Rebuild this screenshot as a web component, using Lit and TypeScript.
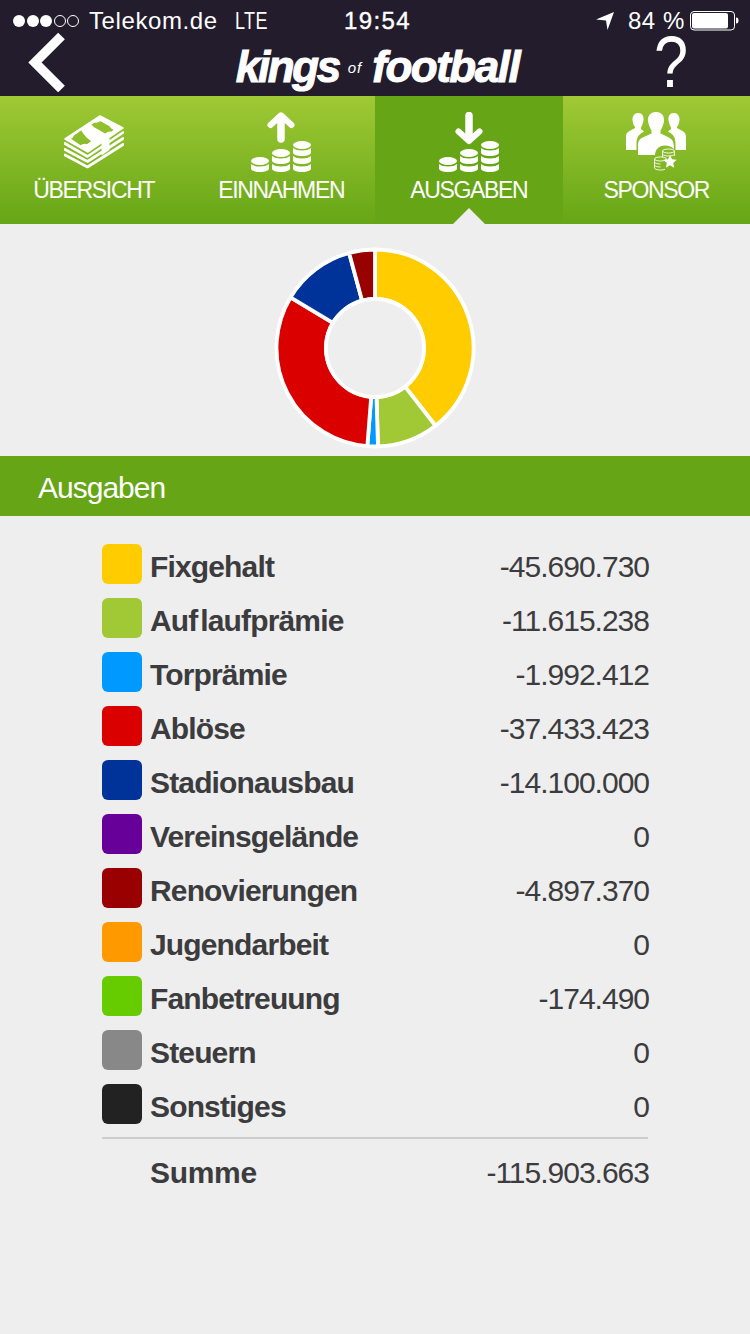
import { LitElement, html, css, svg } from "lit";
import { customElement } from "lit/decorators.js";

const rows: [string, string, string][] = [
  ["#ffcc00", "Fixgehalt", "-45.690.730"],
  ["#a1c935", "Auflaufprämie", "-11.615.238"],
  ["#0099ff", "Torprämie", "-1.992.412"],
  ["#db0000", "Ablöse", "-37.433.423"],
  ["#003399", "Stadionausbau", "-14.100.000"],
  ["#660099", "Vereinsgelände", "0"],
  ["#990000", "Renovierungen", "-4.897.370"],
  ["#ff9900", "Jugendarbeit", "0"],
  ["#66cc00", "Fanbetreuung", "-174.490"],
  ["#888888", "Steuern", "0"],
  ["#222222", "Sonstiges", "0"],
];

const pieData: [string, number][] = [
  ["#ffcc00", 45690730],
  ["#a1c935", 11615238],
  ["#0099ff", 1992412],
  ["#db0000", 37433423],
  ["#003399", 14100000],
  ["#990000", 4897370],
];

function donut() {
  const total = pieData.reduce((s, d) => s + d[1], 0);
  const cx = 102, cy = 102, R = 98.5, r = 49;
  let a = 0;
  const P = (rad: number, ang: number) =>
    `${(cx + rad * Math.sin(ang)).toFixed(2)} ${(cy - rad * Math.cos(ang)).toFixed(2)}`;
  return pieData.map(([c, v]) => {
    const a0 = a;
    const a1 = a + (v / total) * Math.PI * 2;
    a = a1;
    const large = a1 - a0 > Math.PI ? 1 : 0;
    const d = `M${P(R, a0)}A${R} ${R} 0 ${large} 1 ${P(R, a1)}L${P(r, a1)}A${r} ${r} 0 ${large} 0 ${P(r, a0)}Z`;
    return svg`<path d=${d} fill=${c} stroke="#fff" stroke-width="3.8" stroke-linejoin="round"/>`;
  });
}

function stack(xc: number, bands: number[]) {
  const capTop = bands[0] - 7;
  return svg`<ellipse cx=${xc} cy=${capTop + 4} rx="9" ry="4" fill="#fff"/>
    ${bands.map((y) => svg`<path fill="#fff" d="M${xc - 9} ${y}c2 1.700 5 2.500 9 2.500s7-.8 9-2.500v4.500c0 2-4 3.500-9 3.500s-9-1.500-9-3.500z"/>`)}`;
}

const coinStacks = svg`${stack(9, [52])}${stack(30, [44, 52])}${stack(51, [36, 44, 52])}`;

const upIcon = html`<svg class="ic" viewBox="0 0 60 60" width="60" height="60" aria-hidden="true">
  <path d="M19.500 13L30 3.300 40.500 13" fill="none" stroke="#fff" stroke-width="6" stroke-linecap="round" stroke-linejoin="round"/>
  <path d="M30 5V27" stroke="#fff" stroke-width="7.500" stroke-linecap="round"/>
  ${coinStacks}
</svg>`;

const downIcon = html`<svg class="ic" viewBox="0 0 60 60" width="60" height="60" aria-hidden="true">
  <path d="M19.500 19.500L30 29 40.500 19.500" fill="none" stroke="#fff" stroke-width="6" stroke-linecap="round" stroke-linejoin="round"/>
  <path d="M30 3.500V27" stroke="#fff" stroke-width="7.500" stroke-linecap="round"/>
  ${coinStacks}
</svg>`;

const moneyIcon = html`<svg class="ic money" viewBox="0 0 60 54" width="60" height="54" aria-hidden="true">
  <g fill="none" stroke="#fff" stroke-width="2.700" stroke-linejoin="round" stroke-linecap="round">
    <path d="M1 28.500L23.500 41.500 59 17.500"/>
    <path d="M1 34.500L23.500 46.500 59 23.500"/>
    <path d="M1 40L23.500 52 59 29.500"/>
  </g>
  <path fill="#fff" d="M37.500 25L45.500 20V35L37.500 40.500z"/>
  <path fill="#fff" fill-rule="evenodd" stroke="#fff" stroke-width="1.500" stroke-linejoin="round" d="M36 1L59 13 24 37 1 24z
    M36 5C35 6.500 32 7 30 7L26.500 9.500C28 12 30 13.500 32.500 14.500L41 19.500C43 18 45.500 17 47.500 17.500L51 14.500C48.500 14 47 12.500 46 10.500z
    M17.500 14.500L9.500 20C9 21.500 7.500 23 5.500 23.500L16.500 31C18 30 20.500 29 23 30L28.500 26C24.500 24 20 19 17.500 14.500z"/>
</svg>`;

const sponsorIcon = html`<svg class="ic" viewBox="0 0 60 60" width="60" height="60" aria-hidden="true">
  <path fill="#fff" d="M12 1C16.500 1 18 4.500 17.500 8.500 17 11.500 16 13.500 15 15.500V17L18 19.500C13 22 10.500 25 10.500 32V38H0V25C0 21 2 20 4.500 18.500L9 16V15C7.500 13 6.500 10.500 6.500 7.500 6.500 4 8.500 1 12 1Z"/>
  <path fill="#fff" transform="translate(60 0) scale(-1 1)" d="M12 1C16.500 1 18 4.500 17.500 8.500 17 11.500 16 13.500 15 15.500V17L18 19.500C13 22 10.500 25 10.500 32V38H0V25C0 21 2 20 4.500 18.500L9 16V15C7.500 13 6.500 10.500 6.500 7.500 6.500 4 8.500 1 12 1Z"/>
  <path fill="#fff" d="M30 0C36 0 38.500 4.500 38 9C37.500 13 36 16 34.500 18.500V21.500L41 24.500C46.500 27 48 29 48 37C44 32.500 35 32 31 37C29.800 38.500 29.200 40.500 29 43H12V34C12 28 14 26.500 19 24.500L25.500 21.500V18.500C24 16 22.500 13 22 9C21.500 4.500 24 0 30 0Z"/>
  <g fill="none" stroke="#fff" stroke-width=".9">
    <ellipse cx="42.500" cy="39" rx="6" ry="2"/>
    <path d="M36.500 39v6M48.500 39v5M36.500 42c0 1 2.500 2 6 2s6-1 6-2"/>
    <ellipse cx="34.500" cy="47" rx="6" ry="2"/>
    <path d="M28.500 47v9c0 1 2.500 2 6 2 2 0 3.500-.3 4.500-.8M28.500 50c0 1 2.500 2 6 2M28.500 53c0 1 2.500 2 6 2"/>
  </g>
  <path fill="#fff" d="M44 43l2 4.300 4.700.5-3.500 3.200 1 4.700-4.200-2.400-4.200 2.400 1-4.700-3.500-3.200 4.700-.5z"/>
</svg>`;

@customElement("app-root")
export class AppRoot extends LitElement {
  static styles = css`
    :host { display: block; width: 750px; height: 1334px; background: #eee; overflow: hidden;
      font-family: "Liberation Sans", Arial, sans-serif; }
    .top { background: #231c2c; height: 96px; color: #fff; position: relative; }
    .status { height: 42px; display: flex; align-items: center; font-size: 24px; line-height: 24px; letter-spacing: .6px; position: relative; }
    .dots { display: flex; gap: 1.500px; margin-left: 13px; margin-right: 10px; }
    .dot { width: 12px; height: 12px; border-radius: 50%; background: #fff; box-sizing: border-box; }
    .dot.o { background: none; border: 1px solid #fff; }
    .lte { margin-left: 17px; display: inline-block; transform: scaleX(.75); transform-origin: left center; }
    .clock { position: absolute; left: 344px; top: 9px; letter-spacing: 1.400px; -webkit-text-stroke: .4px #fff; }
    .right { position: absolute; right: 11px; top: 0; height: 42px; display: flex; align-items: center; }
    .loc { margin-right: 14px; }
    .bat { margin-left: 5px; }
    .nav { height: 54px; display: flex; align-items: center; justify-content: center; position: relative; }
    .back { position: absolute; left: 28px; top: -10px; }
    .logo { font-weight: 700; font-style: italic; font-size: 44px; line-height: 48px; white-space: nowrap; margin: 0 0 3px 5px; -webkit-text-stroke: 1px #fff; }
    .kings { letter-spacing: -2.400px; }
    .ball { letter-spacing: -1.500px; }
    .of { font-size: 15px; letter-spacing: 1px; margin: 0 10px 0 9px; font-weight: 400; vertical-align: 9px; -webkit-text-stroke: 0; }
    .q { position: absolute; left: 654px; top: -7px; font-size: 72px; line-height: 55px; height: 55px; font-weight: 400; transform: scaleX(.85); transform-origin: left top; }
    .tabs { display: flex; height: 128px; background: linear-gradient(#a0c935, #66a616); }
    .tab { width: 187.500px; position: relative; display: flex; flex-direction: column; align-items: center; color: #fff; font-size: 23px; letter-spacing: -1.350px; }
    .tab.on { background: #65a516; }
    .iconbox { height: 60px; margin-top: 16px; display: flex; align-items: flex-start; justify-content: center; }
    .money { margin-top: 3px; }
    .lbl { line-height: 28px; margin-top: 4px; }
    .tab.on::after { content: ""; position: absolute; left: 78px; bottom: 0; border: 16px solid transparent; border-top: 0; border-bottom-color: #eee; }
    .chart { height: 232px; box-sizing: border-box; padding-top: 15px; display: flex; align-items: center; justify-content: center; }
    .head { height: 60px; box-sizing: border-box; padding: 4px 0 0 38px; background: #65a516; color: #fff; font-size: 30px; letter-spacing: -1px; display: flex; align-items: center; }
    .list { margin: 21px 102px 0 102px; }
    .row { display: flex; align-items: center; height: 54px; color: #3c3c3e; font-size: 30px; letter-spacing: -1px; }
    .sw { width: 40px; height: 40px; border-radius: 6px; margin-right: 8px; flex: none; }
    .name { flex: 1; font-weight: 700; letter-spacing: -.85px; margin-top: 6px; }
    .val { font-weight: 400; margin: 6px -1px 0 0; }
    .gap { letter-spacing: 2px; }
    .sum { border-top: 2px solid #ccc; height: 67px; margin-top: 6px; padding-left: 48px; box-sizing: border-box; }
    .sum .name { margin-top: 2px; letter-spacing: -.3px; }
    .sum .val { margin-top: 2px; }
  `;

  render() {
    return html`
      <div class="top">
        <div class="status">
          <span class="dots"><i class="dot"></i><i class="dot"></i><i class="dot"></i><i class="dot o"></i><i class="dot o"></i></span>
          <span>Telekom.de</span><span class="lte">LTE</span>
          <span class="clock">19:54</span>
          <span class="right">
            <svg class="loc" width="18" height="18" viewBox="0 0 18 18" aria-hidden="true"><path fill="#fff" d="M18 0L11.500 18 10 8.500 0 7.500z"/></svg>
            <span>84 %</span>
            <svg class="bat" width="49" height="20" viewBox="0 0 49 20" aria-hidden="true">
              <rect x=".5" y=".5" width="44" height="18.500" rx="3.500" fill="none" stroke="#fff"/>
              <rect x="2" y="2" width="36" height="15.500" rx="2" fill="#fff"/>
              <path fill="#fff" d="M46 6.500c2 0 2.500 1 2.500 3s-.5 3-2.500 3z"/>
            </svg>
          </span>
        </div>
        <div class="nav">
          <svg class="back" width="38" height="60" viewBox="0 0 38 60" aria-hidden="true"><path d="M33.500 4L7 30.500l26.500 26.500" fill="none" stroke="#fff" stroke-width="9.500"/></svg>
          <div class="logo"><span class="kings">kings</span><span class="of">of</span><span class="ball">football</span></div>
          <div class="q">?</div>
        </div>
      </div>
      <div class="tabs">
        <div class="tab"><div class="iconbox">${moneyIcon}</div><div class="lbl">ÜBERSICHT</div></div>
        <div class="tab"><div class="iconbox">${upIcon}</div><div class="lbl">EINNAHMEN</div></div>
        <div class="tab on"><div class="iconbox">${downIcon}</div><div class="lbl">AUSGABEN</div></div>
        <div class="tab"><div class="iconbox">${sponsorIcon}</div><div class="lbl">SPONSOR</div></div>
      </div>
      <div class="chart">
        <svg width="204" height="204" viewBox="0 0 204 204" aria-hidden="true">
          <circle cx="102" cy="102" r="100" fill="#fff"/>
          ${donut()}
          <circle cx="102" cy="102" r="49" fill="#eee" stroke="#fff" stroke-width="3.8"/>
        </svg>
      </div>
      <div class="head">Ausgaben</div>
      <div class="list">
        ${rows.map(([c, n, v]) => html`<div class="row">
          <div class="sw" style="background:${c}"></div>
          <div class="name">${n === "Auflaufprämie" ? html`Au<span class="gap">f</span>laufprämie` : n}</div><div class="val">${v}</div>
        </div>`)}
        <div class="row sum"><div class="name">Summe</div><div class="val">-115.903.663</div></div>
      </div>
    `;
  }
}
